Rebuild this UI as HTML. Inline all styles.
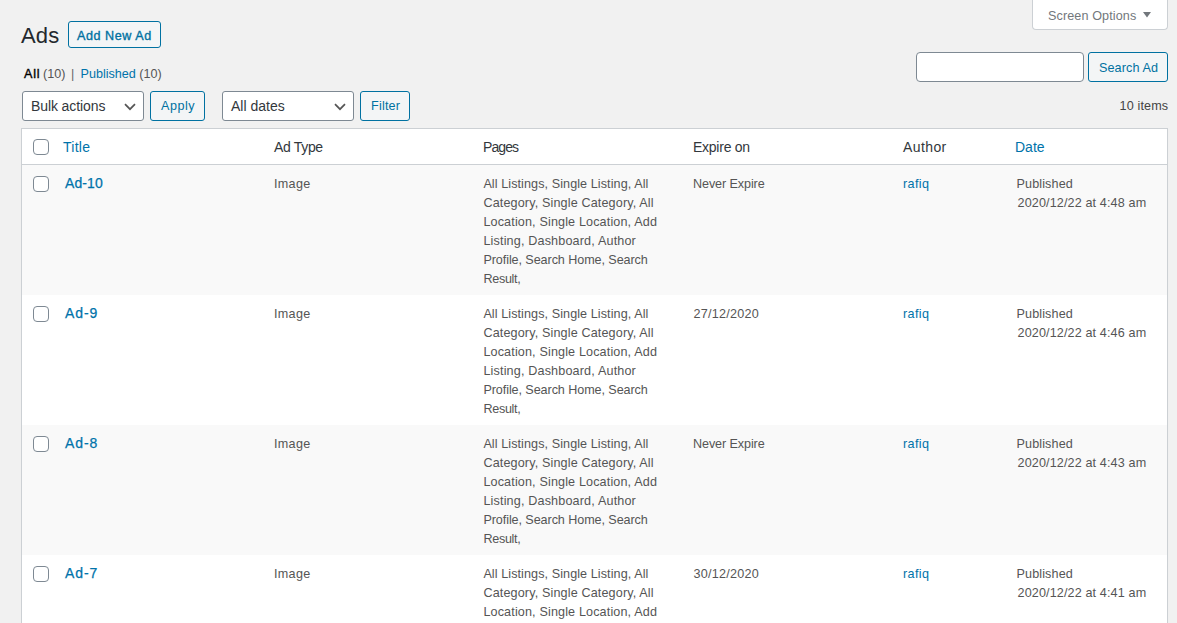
<!DOCTYPE html>
<html><head><meta charset="utf-8"><title>Ads</title>
<style>
html,body{margin:0;padding:0}
body{width:1177px;height:623px;overflow:hidden;position:relative;background:#f1f1f1;font-family:"Liberation Sans",sans-serif}
.t{position:absolute;white-space:pre;line-height:20px}
.box{position:absolute;box-sizing:border-box}
.btn{border:1px solid #0071a1;border-radius:3px;background:#f3f5f6}
.sel{border:1px solid #7e8993;border-radius:3px;background:#fff}
</style></head><body>
<div class="box" style="left:1032px;top:0;width:136px;height:30px;border:1px solid #ccd0d4;border-top:none;border-radius:0 0 4px 4px;background:#fff"></div>
<div class="t" id="so" style="left:1048px;top:6px;font-size:12.6px;color:#72777c;font-weight:400;letter-spacing:0.11px;">Screen Options</div>
<svg style="position:absolute;left:1143px;top:12px" width="8" height="6" viewBox="0 0 8 6"><path d="M0 0H8L4 5.6Z" fill="#72777c"/></svg>
<div class="t" id="ads" style="left:21px;top:26px;font-size:22px;color:#23282d;font-weight:400;letter-spacing:0.2px;">Ads</div>
<div class="box btn" style="left:68px;top:21px;width:93px;height:27px"></div>
<div class="t" id="ana" style="left:77px;top:26px;font-size:12.6px;color:#0071a1;font-weight:400;letter-spacing:0.55px;-webkit-text-stroke:0.35px #0071a1">Add New Ad</div>
<div class="t" id="s1" style="left:24px;top:64px;font-size:12.6px;color:#000;font-weight:400;letter-spacing:0.75px;-webkit-text-stroke:0.35px #000">All</div>
<div class="t" id="s2" style="left:43px;top:64px;font-size:12.6px;color:#555;font-weight:400;">(10)</div>
<div class="t" id="s3" style="left:71px;top:64px;font-size:12.6px;color:#666;font-weight:400;">|</div>
<div class="t" id="s4" style="left:80.5px;top:64px;font-size:12.6px;color:#0073aa;font-weight:400;">Published</div>
<div class="t" id="s5" style="left:139.3px;top:64px;font-size:12.6px;color:#555;font-weight:400;">(10)</div>
<div class="box" style="left:916px;top:52px;width:168px;height:30px;border:1px solid #7e8993;border-radius:4px;background:#fff"></div>
<div class="box btn" style="left:1088px;top:52px;width:80px;height:30px"></div>
<div class="t" id="sa" style="left:1099px;top:58px;font-size:12.6px;color:#0071a1;font-weight:400;letter-spacing:0.1px;">Search Ad</div>
<div class="box sel" style="left:22px;top:91px;width:122px;height:30px"></div>
<div class="t" id="ba" style="left:31px;top:96px;font-size:14px;color:#32373c;font-weight:400;letter-spacing:-0.1px;">Bulk actions</div>
<svg style="position:absolute;left:124px;top:103px" width="12" height="8" viewBox="0 0 12 8"><path d="M1 1.2L6 6.2L11 1.2" fill="none" stroke="#555" stroke-width="1.7"/></svg>
<div class="box btn" style="left:150px;top:91px;width:55px;height:30px"></div>
<div class="t" id="ap" style="left:161px;top:96px;font-size:12.6px;color:#0071a1;font-weight:400;letter-spacing:0.5px;">Apply</div>
<div class="box sel" style="left:222px;top:91px;width:132px;height:30px"></div>
<div class="t" id="ad" style="left:231px;top:96px;font-size:14px;color:#32373c;font-weight:400;">All dates</div>
<svg style="position:absolute;left:334px;top:103px" width="12" height="8" viewBox="0 0 12 8"><path d="M1 1.2L6 6.2L11 1.2" fill="none" stroke="#555" stroke-width="1.7"/></svg>
<div class="box btn" style="left:360px;top:91px;width:50px;height:30px"></div>
<div class="t" id="fi" style="left:371px;top:96px;font-size:12.6px;color:#0071a1;font-weight:400;letter-spacing:0.2px;">Filter</div>
<div class="t" id="it" style="left:1119.5px;top:96px;font-size:12.6px;color:#444;font-weight:400;letter-spacing:0.15px;">10 items</div>
<div class="box" style="left:21px;top:128px;width:1147px;height:600px;border:1px solid #ccd0d4;background:#fff;box-shadow:0 1px 1px rgba(0,0,0,.04)"></div>
<div class="box" style="left:22px;top:164px;width:1145px;height:1px;background:#ccd0d4"></div>
<div class="box" style="left:22px;top:165px;width:1145px;height:130px;background:#f9f9f9"></div>
<div class="box" style="left:22px;top:425px;width:1145px;height:130px;background:#f9f9f9"></div>
<div class="box" style="left:33px;top:139px;width:16px;height:16px;border:1px solid #7e8993;border-radius:4px;background:#fff"></div>
<div class="t" id="h1" style="left:63px;top:137px;font-size:14px;color:#0073aa;font-weight:400;letter-spacing:0.25px;">Title</div>
<div class="t" id="h2" style="left:274px;top:137px;font-size:14px;color:#32373c;font-weight:400;letter-spacing:-0.33px;">Ad Type</div>
<div class="t" id="h3" style="left:483px;top:137px;font-size:14px;color:#32373c;font-weight:400;letter-spacing:-0.9px;">Pages</div>
<div class="t" id="h4" style="left:693px;top:137px;font-size:14px;color:#32373c;font-weight:400;letter-spacing:-0.25px;">Expire on</div>
<div class="t" id="h5" style="left:903px;top:137px;font-size:14px;color:#32373c;font-weight:400;letter-spacing:0.4px;">Author</div>
<div class="t" id="h6" style="left:1015px;top:137px;font-size:14px;color:#0073aa;font-weight:400;">Date</div>
<div class="box" style="left:33px;top:176px;width:16px;height:16px;border:1px solid #7e8993;border-radius:4px;background:#fff"></div>
<div class="t" id="r0t" style="left:65px;top:173px;font-size:14px;color:#0073aa;font-weight:400;letter-spacing:0.1px;-webkit-text-stroke:0.25px #0073aa">Ad-10</div>
<div class="t" id="r0i" style="left:274px;top:174px;font-size:12.6px;color:#555;font-weight:400;letter-spacing:0.3px;">Image</div>
<div class="t" id="r0p0" style="left:483.4px;top:174px;font-size:12.6px;color:#555;font-weight:400;letter-spacing:0.08px;">All Listings, Single Listing, All</div>
<div class="t" id="r0p1" style="left:483.4px;top:193px;font-size:12.6px;color:#555;font-weight:400;letter-spacing:0.14px;">Category, Single Category, All</div>
<div class="t" id="r0p2" style="left:483.4px;top:212px;font-size:12.6px;color:#555;font-weight:400;letter-spacing:0.14px;">Location, Single Location, Add</div>
<div class="t" id="r0p3" style="left:483.4px;top:231px;font-size:12.6px;color:#555;font-weight:400;letter-spacing:0.16px;">Listing, Dashboard, Author</div>
<div class="t" id="r0p4" style="left:483.4px;top:250px;font-size:12.6px;color:#555;font-weight:400;letter-spacing:-0.08px;">Profile, Search Home, Search</div>
<div class="t" id="r0p5" style="left:483.4px;top:269px;font-size:12.6px;color:#555;font-weight:400;letter-spacing:-0.3px;">Result,</div>
<div class="t" id="r0e" style="left:693px;top:174px;font-size:12.6px;color:#555;font-weight:400;letter-spacing:-0.1px;">Never Expire</div>
<div class="t" id="r0a" style="left:903px;top:174px;font-size:12.6px;color:#0073aa;font-weight:400;letter-spacing:0.35px;">rafiq</div>
<div class="t" id="r0d1" style="left:1016.5px;top:174px;font-size:12.6px;color:#555;font-weight:400;letter-spacing:0.12px;">Published</div>
<div class="t" id="r0d2" style="left:1017.5px;top:193px;font-size:12.6px;color:#555;font-weight:400;letter-spacing:0.13px;">2020/12/22 at 4:48 am</div>
<div class="box" style="left:33px;top:306px;width:16px;height:16px;border:1px solid #7e8993;border-radius:4px;background:#fff"></div>
<div class="t" id="r1t" style="left:65px;top:303px;font-size:14px;color:#0073aa;font-weight:400;letter-spacing:0.9px;-webkit-text-stroke:0.25px #0073aa">Ad-9</div>
<div class="t" id="r1i" style="left:274px;top:304px;font-size:12.6px;color:#555;font-weight:400;letter-spacing:0.3px;">Image</div>
<div class="t" id="r1p0" style="left:483.4px;top:304px;font-size:12.6px;color:#555;font-weight:400;letter-spacing:0.08px;">All Listings, Single Listing, All</div>
<div class="t" id="r1p1" style="left:483.4px;top:323px;font-size:12.6px;color:#555;font-weight:400;letter-spacing:0.14px;">Category, Single Category, All</div>
<div class="t" id="r1p2" style="left:483.4px;top:342px;font-size:12.6px;color:#555;font-weight:400;letter-spacing:0.14px;">Location, Single Location, Add</div>
<div class="t" id="r1p3" style="left:483.4px;top:361px;font-size:12.6px;color:#555;font-weight:400;letter-spacing:0.16px;">Listing, Dashboard, Author</div>
<div class="t" id="r1p4" style="left:483.4px;top:380px;font-size:12.6px;color:#555;font-weight:400;letter-spacing:-0.08px;">Profile, Search Home, Search</div>
<div class="t" id="r1p5" style="left:483.4px;top:399px;font-size:12.6px;color:#555;font-weight:400;letter-spacing:-0.3px;">Result,</div>
<div class="t" id="r1e" style="left:693.5px;top:304px;font-size:12.6px;color:#555;font-weight:400;letter-spacing:0.25px;">27/12/2020</div>
<div class="t" id="r1a" style="left:903px;top:304px;font-size:12.6px;color:#0073aa;font-weight:400;letter-spacing:0.35px;">rafiq</div>
<div class="t" id="r1d1" style="left:1016.5px;top:304px;font-size:12.6px;color:#555;font-weight:400;letter-spacing:0.12px;">Published</div>
<div class="t" id="r1d2" style="left:1017.5px;top:323px;font-size:12.6px;color:#555;font-weight:400;letter-spacing:0.13px;">2020/12/22 at 4:46 am</div>
<div class="box" style="left:33px;top:436px;width:16px;height:16px;border:1px solid #7e8993;border-radius:4px;background:#fff"></div>
<div class="t" id="r2t" style="left:65px;top:433px;font-size:14px;color:#0073aa;font-weight:400;letter-spacing:0.9px;-webkit-text-stroke:0.25px #0073aa">Ad-8</div>
<div class="t" id="r2i" style="left:274px;top:434px;font-size:12.6px;color:#555;font-weight:400;letter-spacing:0.3px;">Image</div>
<div class="t" id="r2p0" style="left:483.4px;top:434px;font-size:12.6px;color:#555;font-weight:400;letter-spacing:0.08px;">All Listings, Single Listing, All</div>
<div class="t" id="r2p1" style="left:483.4px;top:453px;font-size:12.6px;color:#555;font-weight:400;letter-spacing:0.14px;">Category, Single Category, All</div>
<div class="t" id="r2p2" style="left:483.4px;top:472px;font-size:12.6px;color:#555;font-weight:400;letter-spacing:0.14px;">Location, Single Location, Add</div>
<div class="t" id="r2p3" style="left:483.4px;top:491px;font-size:12.6px;color:#555;font-weight:400;letter-spacing:0.16px;">Listing, Dashboard, Author</div>
<div class="t" id="r2p4" style="left:483.4px;top:510px;font-size:12.6px;color:#555;font-weight:400;letter-spacing:-0.08px;">Profile, Search Home, Search</div>
<div class="t" id="r2p5" style="left:483.4px;top:529px;font-size:12.6px;color:#555;font-weight:400;letter-spacing:-0.3px;">Result,</div>
<div class="t" id="r2e" style="left:693px;top:434px;font-size:12.6px;color:#555;font-weight:400;letter-spacing:-0.1px;">Never Expire</div>
<div class="t" id="r2a" style="left:903px;top:434px;font-size:12.6px;color:#0073aa;font-weight:400;letter-spacing:0.35px;">rafiq</div>
<div class="t" id="r2d1" style="left:1016.5px;top:434px;font-size:12.6px;color:#555;font-weight:400;letter-spacing:0.12px;">Published</div>
<div class="t" id="r2d2" style="left:1017.5px;top:453px;font-size:12.6px;color:#555;font-weight:400;letter-spacing:0.13px;">2020/12/22 at 4:43 am</div>
<div class="box" style="left:33px;top:566px;width:16px;height:16px;border:1px solid #7e8993;border-radius:4px;background:#fff"></div>
<div class="t" id="r3t" style="left:65px;top:563px;font-size:14px;color:#0073aa;font-weight:400;letter-spacing:0.9px;-webkit-text-stroke:0.25px #0073aa">Ad-7</div>
<div class="t" id="r3i" style="left:274px;top:564px;font-size:12.6px;color:#555;font-weight:400;letter-spacing:0.3px;">Image</div>
<div class="t" id="r3p0" style="left:483.4px;top:564px;font-size:12.6px;color:#555;font-weight:400;letter-spacing:0.08px;">All Listings, Single Listing, All</div>
<div class="t" id="r3p1" style="left:483.4px;top:583px;font-size:12.6px;color:#555;font-weight:400;letter-spacing:0.14px;">Category, Single Category, All</div>
<div class="t" id="r3p2" style="left:483.4px;top:602px;font-size:12.6px;color:#555;font-weight:400;letter-spacing:0.14px;">Location, Single Location, Add</div>
<div class="t" id="r3p3" style="left:483.4px;top:621px;font-size:12.6px;color:#555;font-weight:400;letter-spacing:0.16px;">Listing, Dashboard, Author</div>
<div class="t" id="r3p4" style="left:483.4px;top:640px;font-size:12.6px;color:#555;font-weight:400;letter-spacing:-0.08px;">Profile, Search Home, Search</div>
<div class="t" id="r3p5" style="left:483.4px;top:659px;font-size:12.6px;color:#555;font-weight:400;letter-spacing:-0.3px;">Result,</div>
<div class="t" id="r3e" style="left:693.5px;top:564px;font-size:12.6px;color:#555;font-weight:400;letter-spacing:0.25px;">30/12/2020</div>
<div class="t" id="r3a" style="left:903px;top:564px;font-size:12.6px;color:#0073aa;font-weight:400;letter-spacing:0.35px;">rafiq</div>
<div class="t" id="r3d1" style="left:1016.5px;top:564px;font-size:12.6px;color:#555;font-weight:400;letter-spacing:0.12px;">Published</div>
<div class="t" id="r3d2" style="left:1017.5px;top:583px;font-size:12.6px;color:#555;font-weight:400;letter-spacing:0.13px;">2020/12/22 at 4:41 am</div>
</body></html>
